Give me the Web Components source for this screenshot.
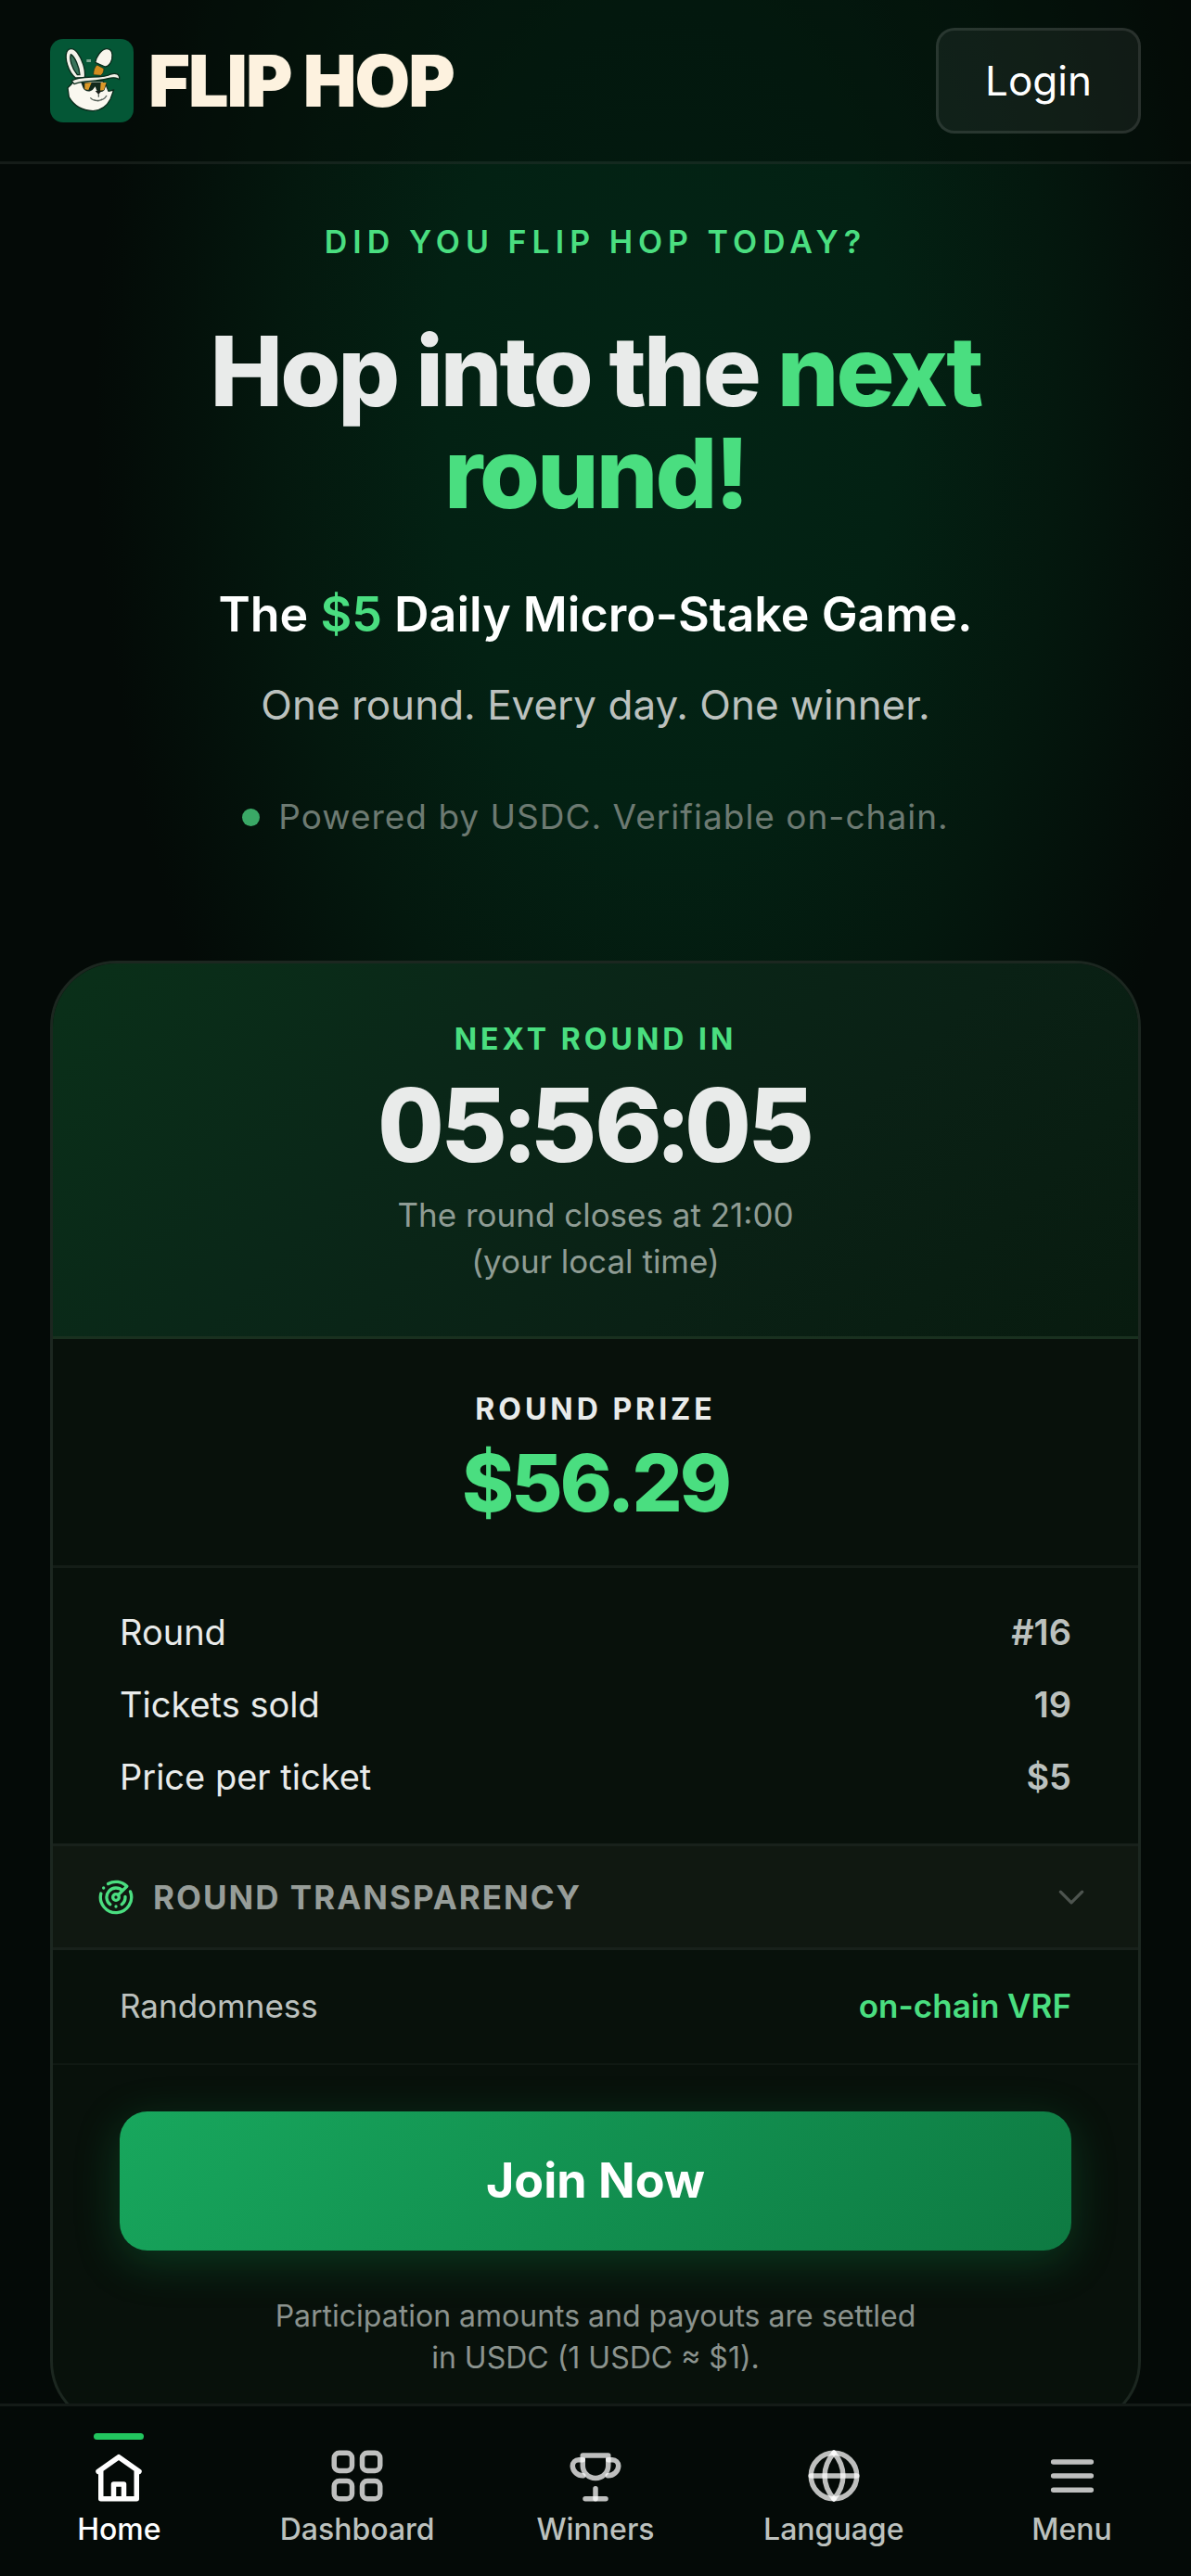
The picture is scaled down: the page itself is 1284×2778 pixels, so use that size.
<!DOCTYPE html>
<html lang="en">
<head>
<meta charset="utf-8">
<meta name="viewport" content="width=device-width, initial-scale=1">
<title>Flip Hop</title>
<style>
  :root {
    --green: #4ade80;
    --text: #e9ebea;
    --soft: #bcc1be;
    --muted: #8b938e;
    --line: #18211b;
  }
  html { background: #030806; }
  body {
    margin: 0;
    min-height: 100vh;
    box-sizing: border-box;
    padding-bottom: 120px;
    font-family: Inter, "Noto Sans", sans-serif;
    color: var(--text);
    background: radial-gradient(ellipse 48% 1100px at 56% 440px, #032415 0%, #032113 40%, #04180e 68%, #040a07 100%) no-repeat, #030806;
  }
</style>
</head>
<body>
<site-header></site-header>
<main>
  <hero-banner>
    <span slot="eyebrow">DID YOU FLIP HOP TODAY?</span>
    <span slot="title">Hop into the <mark-up>next</mark-up> <mark-up>round!</mark-up></span>
    <span slot="lead">The <mark-up>$5</mark-up> Daily Micro-Stake Game.</span>
    <span slot="tagline">One round. Every day. One winner.</span>
    <span slot="note">Powered by USDC. Verifiable on-chain.</span>
  </hero-banner>
  <round-card></round-card>
</main>
<tab-bar>
  <tab-item icon="home" active>Home</tab-item>
  <tab-item icon="grid">Dashboard</tab-item>
  <tab-item icon="trophy">Winners</tab-item>
  <tab-item icon="globe">Language</tab-item>
  <tab-item icon="menu">Menu</tab-item>
</tab-bar>

<script>
const define = (name, html, setup) => customElements.define(name, class extends HTMLElement {
  constructor() {
    super();
    this.attachShadow({ mode: 'open' }).innerHTML = html;
  }
  connectedCallback() { if (setup) setup(this, this.shadowRoot); }
});

const ICONS = {
  home: '<path d="M4 10.3 12 4.6l8 5.7M5 10v11h14V10M10 21v-5.700h4V21"/>',
  grid: '<rect x="3" y="3" width="7" height="7" rx="2"/><rect x="14" y="3" width="7" height="7" rx="2"/><rect x="3" y="14" width="7" height="7" rx="2"/><rect x="14" y="14" width="7" height="7" rx="2"/>',
  trophy: '<path d="M7 4h10v4a5 4.900 0 0 1-10 0z"/><path d="M7 5.700H5.400A2.400 2.400 0 0 0 3 8.100 4 4 0 0 0 7.200 11.900"/><path d="M17 5.700h1.600A2.400 2.400 0 0 1 21 8.100 4 4 0 0 1 16.800 11.900"/><path d="M12 17v4"/><path d="M8 21h8"/>',
  globe: '<circle cx="12" cy="12" r="9"/><path d="M3 12h18"/><path d="M12 3c-4.800 5.500-4.800 12.500 0 18"/><path d="M12 3c4.800 5.500 4.800 12.500 0 18"/>',
  menu: '<path d="M4.600 6.500h14.800M4.600 12h14.800M4.600 17.500h14.800"/>',
  chevron: '<path d="m5 8.500 7 7 7-7"/>',
  radar: '<path d="M19.070 4.930A10 10 0 0 0 6.990 3.340M4 6h.01M2.290 9.620A10 10 0 1 0 21.310 8.350M16.240 7.760A6 6 0 1 0 8.230 16.670M12 18h.01M17.990 11.660A6 6 0 0 1 15.770 16.670M13.410 10.590l5.660-5.660"/><circle cx="12" cy="12" r="2"/>'
};

define('ui-icon', `
  <style>
    :host { display: block; flex: none; width: 66px; height: 66px; }
    svg { display: block; width: 100%; height: 100%; fill: none; stroke: currentColor;
          stroke-opacity: var(--icon-opacity, 1);
          stroke-width: 2; stroke-linecap: round; stroke-linejoin: round; }
  </style>
  <svg viewBox="0 0 24 24" aria-hidden="true"></svg>`,
  (el, root) => { root.querySelector('svg').innerHTML = ICONS[el.getAttribute('name')] || ''; });

define('mark-up', `
  <style>:host { display: inline; color: var(--green); }</style><slot></slot>`);

define('brand-mark', `
  <style>:host { display: block; flex: none; width: 90px; height: 90px; } svg { display: block; }</style>
  <svg viewBox="0 0 270 270" width="90" height="90" aria-hidden="true">
    <rect width="270" height="270" rx="42" fill="#045736"/>
    <g stroke="#0a2c1c" stroke-width="4" stroke-linejoin="round">
      <path d="M82 126C58 106 46 62 54 42c6-14 22-14 34 2 16 22 28 56 24 82z" fill="#f4f2ea"/>
      <path d="M88 116C70 94 62 66 67 50c13 8 28 40 29 66z" fill="#39735a"/>
      <path d="M146 76c2-16 18-42 36-44 17-2 22 16 18 34-3 12-12 24-22 24z" fill="#f8f5ec"/>
      <path d="M140 116c0-14 4-26 12-32l22 12c0 10-4 18-10 22z" fill="#d38c1f" stroke-width="2"/>
      <path d="M76 138c-8 10-14 16-19 20l4 30c16 28 44 44 78 45 26-2 46-18 56-38l11-30-17 4c-4-14-10-24-18-32z" fill="#faf8f0"/>
      <path d="M70 136c24-22 100-4 126-22 16-5 30-1 28 17-10-8-24-6-40-2-38 10-78 5-106 17z" fill="#f1efe6"/>
    </g>
    <path d="M100 141h84l-8 24c-8 9-20 9-26 0l-4-11-8 10c-10 9-26 6-31-5z" fill="#11281c"/>
    <path d="m112 143 22-2-10 24-12-2zM164 141h18l-8 24-12 2z" fill="#db9828"/>
    <path d="m146 168 20-1-9 13z" fill="#151b17"/>
    <path d="M157 178v10m-27 2c12 14 42 13 53-7m-41 14c10 5 20 3 26-2" fill="none" stroke="#59635b" stroke-width="4"/>
    <path d="M118 66h14v9h-14z" fill="#7ea792"/>
  </svg>`);

define('site-header', `
  <style>
    :host { display: block; background: rgba(5, 12, 8, .4); border-bottom: 3px solid rgba(255, 255, 255, .07); }
    header { display: flex; align-items: center; justify-content: space-between; height: 174px; padding: 0 54px; }
    .brand { display: flex; align-items: center; gap: 16px; color: #fdf2df; text-decoration: none;
             font-size: 77px; line-height: 90px; font-weight: 900; letter-spacing: -2px; }
    button { height: 114px; padding: 0 50px; border: 3px solid rgba(255, 255, 255, .1); border-radius: 20px;
             background: rgba(255, 255, 255, .055); color: #fff; font: inherit; font-size: 44px; line-height: 60px; }
  </style>
  <header>
    <a class="brand" href="#"><brand-mark></brand-mark><span>FLIP HOP</span></a>
    <button type="button">Login</button>
  </header>`);

define('hero-banner', `
  <style>
    :host { display: block; padding: 64px 54px 131px; text-align: center; }
    p, h1 { margin: 0; }
    .eyebrow { color: var(--green); font-size: 34px; line-height: 40px; font-weight: 600; letter-spacing: 6px; }
    h1 { max-width: 960px; margin: 64px auto 0; font-size: 105px; line-height: 110px; font-weight: 800; letter-spacing: -3px; }
    .lead { margin-top: 66px; color: #fff; font-size: 52px; line-height: 64px; font-weight: 600; }
    .tagline { margin-top: 37px; color: var(--soft); font-size: 44px; line-height: 56px; }
    .note { display: flex; justify-content: center; align-items: center; gap: 20px; margin-top: 69px;
            color: #6d7a72; font-size: 37px; line-height: 48px; letter-spacing: 1px; }
    .note i { width: 19px; height: 19px; border-radius: 50%; background: #3aa866; }
  </style>
  <p class="eyebrow"><slot name="eyebrow"></slot></p>
  <h1><slot name="title"></slot></h1>
  <p class="lead"><slot name="lead"></slot></p>
  <p class="tagline"><slot name="tagline"></slot></p>
  <p class="note"><i></i><slot name="note"></slot></p>`);

define('stat-row', `
  <style>
    :host { display: flex; justify-content: space-between; align-items: center; font-size: 38px; line-height: 50px; }
    :host([small]) { font-size: 35px; line-height: 48px; color: var(--soft); }
    b { font-weight: 600; color: var(--soft); }
    :host([small]) b { color: var(--green); }
  </style>
  <slot></slot><b></b>`,
  (el, root) => { root.querySelector('b').textContent = el.getAttribute('value'); });

define('round-card', `
  <style>
    :host { display: block; margin: 0 54px; border: 3px solid #1c2720; border-radius: 72px; overflow: hidden;
            background: #08110b; text-align: center; }
    p, h2 { margin: 0; }
    .label { font-size: 32px; line-height: 40px; font-weight: 700; letter-spacing: 4px; }
    .timer { padding: 62px 72px 56px; border-bottom: 3px solid #19301f;
             background: linear-gradient(135deg, #0a3019 0%, #0a2718 35%, #0a2115 65%, #081b0f 100%); }
    .timer .label { color: var(--green); }
    time { display: block; margin-top: 16px; font-size: 110px; line-height: 112px; font-weight: 800;
           letter-spacing: -2px; font-variant-numeric: tabular-nums; }
    .closes { margin-top: 16px; color: #8f9c94; font-size: 35px; line-height: 50px; }
    .prize { padding: 56px 72px 44px; border-bottom: 3px solid #141d17; }
    .amount { margin-top: 16px; color: var(--green); font-size: 85px; line-height: 88px; font-weight: 800; letter-spacing: -3px; }
    .stats { display: flex; flex-direction: column; gap: 28px; padding: 44px 72px 47px; }
    .toggle { display: flex; align-items: center; width: 100%; height: 115px; padding: 0 52px 0 48px; gap: 20px;
              border: 0; border-top: 3px solid var(--line); border-bottom: 3px solid var(--line);
              background: #101811; color: #979d99; font: inherit; font-size: 35px; line-height: 48px;
              font-weight: 700; letter-spacing: 2px; }
    .toggle ui-icon { width: 40px; height: 40px; color: var(--green); }
    .toggle ui-icon:last-child { width: 40px; height: 40px; margin-left: auto; color: #4d544f; }
    .fair { padding: 36px 72px 38px; border-bottom: 2px solid #101913; }
    .join { padding: 50px 72px 50px; }
    .cta { display: block; width: 100%; height: 150px; border: 0; border-radius: 30px; color: #fff;
           background: linear-gradient(135deg, #18a75d 0%, #129050 50%, #0e7a42 100%);
           box-shadow: 0 12px 48px rgba(22, 163, 84, .28);
           font: inherit; font-size: 52px; line-height: 60px; font-weight: 700; }
    .foot { margin-top: 48px; color: var(--muted); font-size: 32px; line-height: 45px; }
  </style>
  <section class="timer">
    <h2 class="label">NEXT ROUND IN</h2>
    <time>05:56:05</time>
    <p class="closes">The round closes at 21:00<br>(your local time)</p>
  </section>
  <section class="prize">
    <h2 class="label">ROUND PRIZE</h2>
    <p class="amount">$56.29</p>
  </section>
  <section class="stats">
    <stat-row value="#16">Round</stat-row>
    <stat-row value="19">Tickets sold</stat-row>
    <stat-row value="$5">Price per ticket</stat-row>
  </section>
  <button class="toggle" type="button" aria-expanded="true"><ui-icon name="radar"></ui-icon><span>ROUND TRANSPARENCY</span><ui-icon name="chevron"></ui-icon></button>
  <section class="fair"><stat-row small value="on-chain VRF">Randomness</stat-row></section>
  <section class="join">
    <button class="cta" type="button">Join Now</button>
    <p class="foot">Participation amounts and payouts are settled<br>in USDC (1 USDC ≈ $1).</p>
  </section>`);

define('tab-bar', `
  <style>
    :host { display: block; position: fixed; left: 0; right: 0; bottom: 0; border-top: 3px solid #141b17; background: #040a07; }
    nav { display: flex; }
  </style>
  <nav><slot></slot></nav>`);

define('tab-item', `
  <style>
    :host { display: block; flex: 1 1 0; color: #bcc1be; --icon-opacity: .74; }
    :host([active]) { color: #fff; --icon-opacity: 1; }
    a { display: flex; flex-direction: column; align-items: center; padding: 29px 0 32px; color: inherit;
        text-decoration: none; font-size: 32px; line-height: 36px; font-weight: 500; }
    i { width: 54px; height: 7px; margin-bottom: 6px; border-radius: 4px; }
    :host([active]) i { background: #22c55e; }
    ui-icon { color: #fff; }
    span { margin-top: 7px; }
  </style>
  <a href="#"><i></i><ui-icon></ui-icon><span><slot></slot></span></a>`,
  (el, root) => {
    const old = root.querySelector('ui-icon');
    const icon = document.createElement('ui-icon');
    icon.setAttribute('name', el.getAttribute('icon'));
    old.replaceWith(icon);
  });
</script>
</body>
</html>
